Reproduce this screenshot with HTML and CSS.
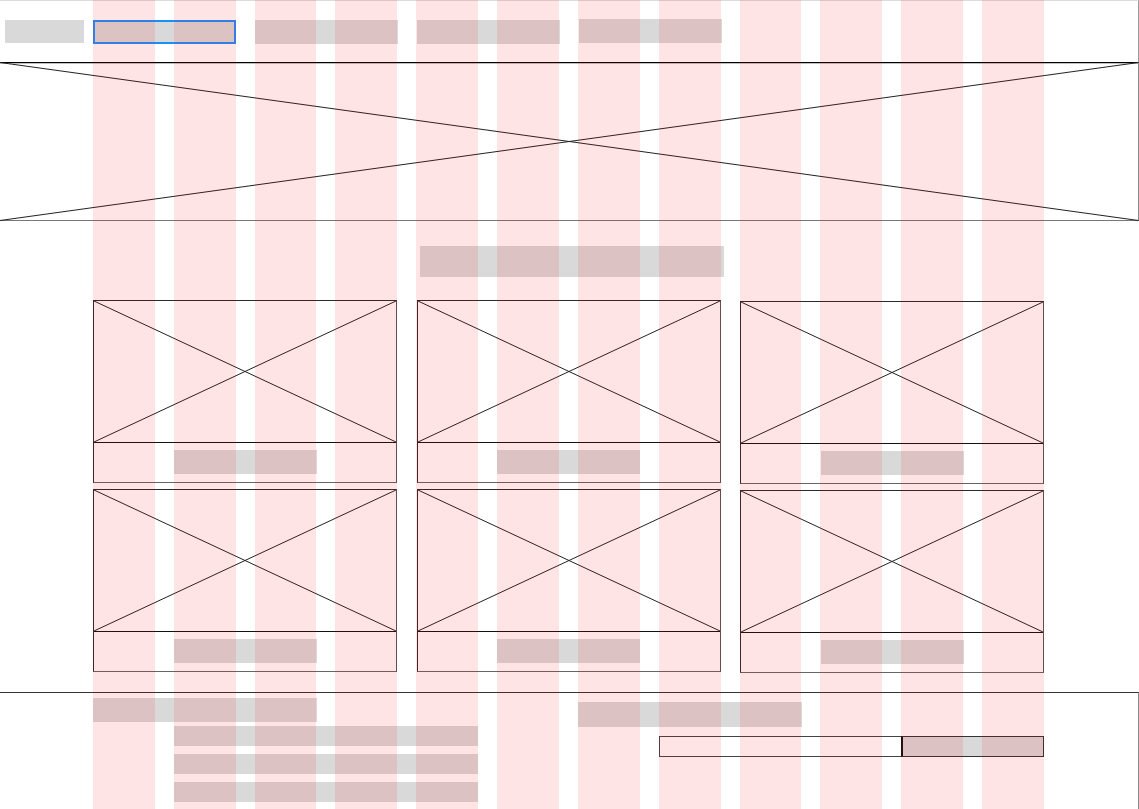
FILE: index.html
```html
<!DOCTYPE html>
<html lang="en">
<head>
<meta charset="utf-8">
<title>Wireframe</title>
<link rel="stylesheet" href="styles.css">
</head>
<body>
<div class="page">
  <header class="topbar">
    <div class="logo ph"></div>
    <nav class="nav">
      <div class="nav-item ph active"></div>
      <div class="nav-item ph"></div>
      <div class="nav-item ph"></div>
      <div class="nav-item ph up"></div>
    </nav>
  </header>

  <div class="hero">
    <svg class="hero-svg" width="1139" height="159" viewBox="0 0 1139 159">
      <line x1="0" y1="0.5" x2="1139" y2="0.5" stroke="#000" stroke-width="1.4"/>
      <line x1="0" y1="158.5" x2="1139" y2="158.5" stroke="#777" stroke-width="1"/>
      <line x1="1138.5" y1="0" x2="1138.5" y2="159" stroke="#888" stroke-width="1"/>
      <line x1="0" y1="0.5" x2="1138.5" y2="158.5" stroke="#222" stroke-width="1"/>
      <line x1="0" y1="158.5" x2="1138.5" y2="0.5" stroke="#222" stroke-width="1"/>
    </svg>
  </div>

  <main class="content">
    <div class="title ph"></div>
    <div class="cards">
      <div class="card"><div class="card-img"><svg viewBox="0 0 100 100" preserveAspectRatio="none"><line x1="0" y1="0" x2="100" y2="100"/><line x1="0" y1="100" x2="100" y2="0"/></svg></div><div class="card-cap"><div class="cap ph"></div></div></div>
      <div class="card"><div class="card-img"><svg viewBox="0 0 100 100" preserveAspectRatio="none"><line x1="0" y1="0" x2="100" y2="100"/><line x1="0" y1="100" x2="100" y2="0"/></svg></div><div class="card-cap"><div class="cap ph"></div></div></div>
      <div class="card shift"><div class="card-img"><svg viewBox="0 0 100 100" preserveAspectRatio="none"><line x1="0" y1="0" x2="100" y2="100"/><line x1="0" y1="100" x2="100" y2="0"/></svg></div><div class="card-cap"><div class="cap ph"></div></div></div>
      <div class="card"><div class="card-img"><svg viewBox="0 0 100 100" preserveAspectRatio="none"><line x1="0" y1="0" x2="100" y2="100"/><line x1="0" y1="100" x2="100" y2="0"/></svg></div><div class="card-cap"><div class="cap ph"></div></div></div>
      <div class="card"><div class="card-img"><svg viewBox="0 0 100 100" preserveAspectRatio="none"><line x1="0" y1="0" x2="100" y2="100"/><line x1="0" y1="100" x2="100" y2="0"/></svg></div><div class="card-cap"><div class="cap ph"></div></div></div>
      <div class="card shift"><div class="card-img"><svg viewBox="0 0 100 100" preserveAspectRatio="none"><line x1="0" y1="0" x2="100" y2="100"/><line x1="0" y1="100" x2="100" y2="0"/></svg></div><div class="card-cap"><div class="cap ph"></div></div></div>
    </div>
  </main>

  <footer class="footer">
    <div class="footer-inner">
      <div class="f-block">
        <div class="f-head ph"></div>
        <div class="f-list">
          <div class="f-item ph"></div>
          <div class="f-item ph"></div>
          <div class="f-item ph"></div>
        </div>
      </div>
      <div class="f-block f-right">
        <div class="f-head2 ph"></div>
        <form class="f-form">
          <div class="f-input"></div>
          <div class="f-btn"></div>
        </form>
      </div>
    </div>
  </footer>

  <div class="grid-overlay" aria-hidden="true">
    <span></span><span></span><span></span><span></span><span></span><span></span>
    <span></span><span></span><span></span><span></span><span></span><span></span>
  </div>
</div>
</body>
</html>
```

FILE: styles.css
```css
* { box-sizing: border-box; }

html, body {
  margin: 0;
  padding: 0;
  background: #fff;
  font-family: "Liberation Sans", Arial, sans-serif;
}

.page {
  position: relative;
  width: 1139px;
  min-height: 809px;
  overflow: hidden;
}

.ph { background: #d9d9d9; }

/* Header */
.topbar {
  height: 62px;
  border-top: 1px solid #dcdcdc;
  border-right: 1px solid #999;
  display: flex;
  align-items: flex-start;
  padding-top: 19px;
  padding-left: 5px;
}

.logo {
  width: 79px;
  height: 23px;
  margin-right: 9px;
}

.nav {
  display: flex;
  gap: 19px;
}

.nav-item {
  width: 143px;
  height: 24px;
}

.nav-item.up { margin-top: -1px; }

.nav-item.active {
  border: 2px solid #1a90ff;
}

/* Hero */
.hero { height: 159px; }
.hero-svg { display: block; }

/* Content */
.content {
  width: 951px;
  margin-left: 93px;
  padding-top: 25px;
}

.title {
  width: 304px;
  height: 31px;
  margin-left: 327px;
}

.cards {
  margin-top: 23px;
  display: grid;
  grid-template-columns: repeat(3, 1fr);
  column-gap: 19.5px;
  row-gap: 6px;
}

.card {
  border: 1px solid #2a2a2a;
  border-right-color: #555;
  border-bottom-color: #666;
  height: 183px;
  display: flex;
  flex-direction: column;
}

.card.shift { margin-top: 1px; margin-bottom: -1px; }

.card-img {
  height: 142px;
  border-bottom: 1.5px solid #111;
}

.card-img svg {
  display: block;
  width: 100%;
  height: 100%;
}

.card-img line {
  stroke: #222;
  stroke-width: 1;
  vector-effect: non-scaling-stroke;
}

.card-cap {
  flex: 1;
  display: flex;
  justify-content: center;
  padding-top: 7px;
}

.cap {
  width: 143px;
  height: 24px;
}

/* Footer */
.footer {
  margin-top: 20px;
  border-top: 1px solid #333;
  border-right: 1px solid #888;
  height: 130px;
}

.footer-inner {
  width: 951px;
  margin-left: 93px;
  display: grid;
  grid-template-columns: repeat(12, 1fr);
  column-gap: 19px;
  padding-top: 5px;
}

.f-block {
  grid-column: span 6;
  display: grid;
  grid-template-columns: repeat(6, 1fr);
  column-gap: 19px;
  align-content: start;
}

.f-head {
  grid-column: 1 / 4;
  height: 24px;
}

.f-list {
  grid-column: 2 / 6;
  margin-top: 4px;
  display: flex;
  flex-direction: column;
  gap: 8px;
}

.f-item { height: 20px; }

.f-head2 {
  grid-column: 1 / 4;
  height: 25px;
  margin-top: 4px;
}

.f-form {
  grid-column: 2 / 7;
  margin: 9px 0 0 0;
  display: flex;
  height: 21px;
}

.f-input {
  flex: 1;
  border: 1px solid #444;
  border-right: none;
  background: #fff;
}

.f-btn {
  width: 143px;
  background: #d9d9d9;
  border: 1px solid #333;
  border-left: 2px solid #111;
}

/* 12-column overlay */
.grid-overlay {
  position: absolute;
  top: 0;
  bottom: 0;
  left: 93px;
  width: 951px;
  display: grid;
  grid-template-columns: repeat(12, 1fr);
  column-gap: 19px;
  pointer-events: none;
}

.grid-overlay span {
  background: rgba(255, 0, 16, 0.105);
}
```
